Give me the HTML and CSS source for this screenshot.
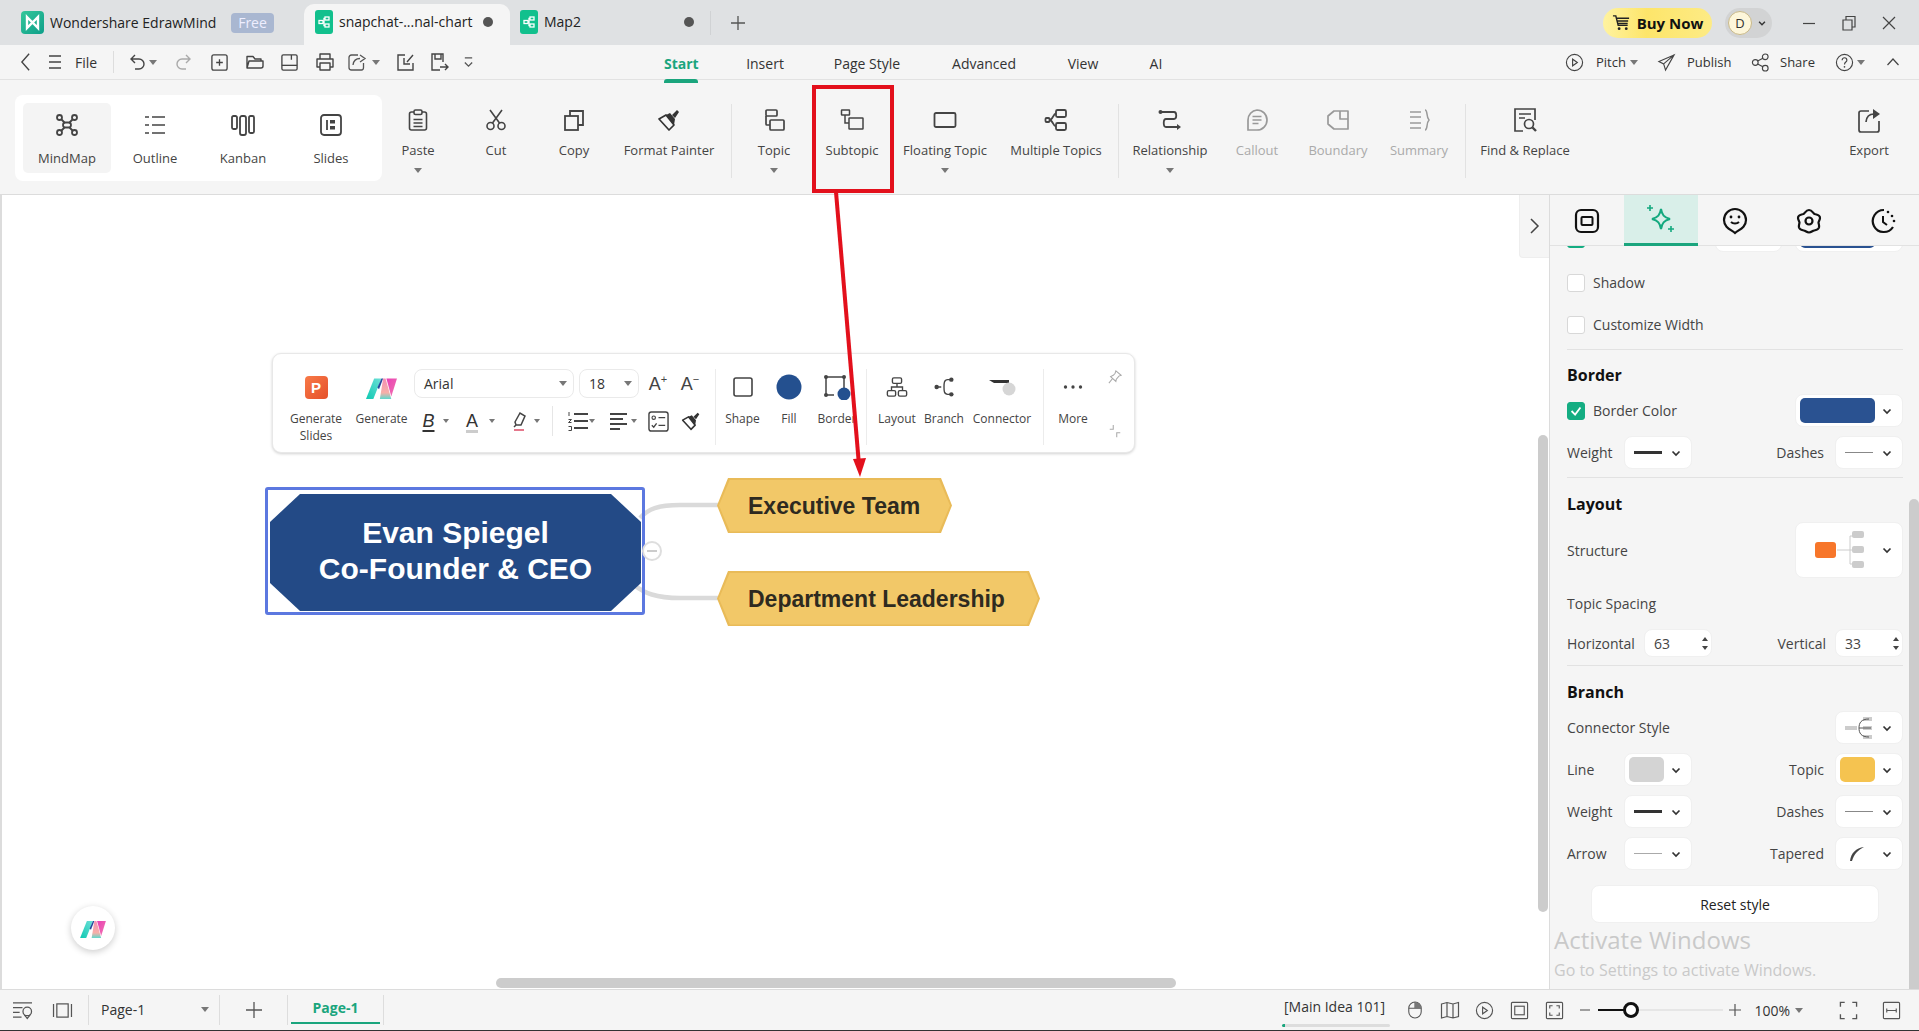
FILE: index.html
```html
<!DOCTYPE html>
<html lang="en">
<head>
<meta charset="utf-8">
<title>Wondershare EdrawMind</title>
<link rel="stylesheet" href="styles.css">
</head>
<body>
<svg class="sprite" width="0" height="0" aria-hidden="true">
  <defs>
    <linearGradient id="gAi" x1="0" y1="1" x2="1" y2="0">
      <stop offset="0" stop-color="#0fc9b2"/><stop offset="1" stop-color="#6fe0d8"/>
    </linearGradient>
    <linearGradient id="gAi2" x1="0" y1="0" x2="0" y2="1">
      <stop offset="0" stop-color="#f58fb4"/><stop offset=".7" stop-color="#f7b0a8"/><stop offset="1" stop-color="#5fd8cc"/>
    </linearGradient>
    <linearGradient id="gAi3" x1="0" y1="0" x2="1" y2="1">
      <stop offset="0" stop-color="#e83fb4"/><stop offset="1" stop-color="#f277b0"/>
    </linearGradient>
    <linearGradient id="gLogo" x1="0" y1="0" x2="1" y2="1">
      <stop offset="0" stop-color="#35c79a"/><stop offset="1" stop-color="#0e9f8a"/>
    </linearGradient>
    <symbol id="chev" viewBox="0 0 12 12"><path d="M2.500 4.500 6 8l3.500-3.500" fill="none" stroke="#333" stroke-width="1.700"/></symbol>
    <symbol id="doc" viewBox="0 0 18 24"><rect width="18" height="24" rx="3" fill="#12c08d"/><g fill="none" stroke="#fff" stroke-width="1.300"><rect x="10" y="7" width="4" height="3"/><rect x="10" y="14" width="4" height="3"/><rect x="4" y="10.500" width="4" height="3"/><path d="M8 12h1v-3.500h1M9 12v3.500h1"/></g></symbol>
    <symbol id="ai" viewBox="0 0 38 28"><path d="M0 28 10 3h9L9 28z" fill="url(#gAi)"/><path d="M14 14 19 3h2L16 16z" fill="#27489c"/><path d="M17 28l4-25h3l7 25z" fill="url(#gAi2)"/><path d="M25 3h13l-7 22z" fill="url(#gAi3)"/></symbol>
  </defs>
</svg>
<div class="app">
  <header class="titlebar">
    <svg class="applogo" viewBox="0 0 23 23"><rect width="23" height="23" rx="4" fill="url(#gLogo)"/><path d="M6 6l5.500 5.500L17 6v11l-5.500-5.500L6 17z" fill="none" stroke="#fff" stroke-width="2.400"/></svg>
    <span class="appname">Wondershare EdrawMind</span>
    <span class="free">Free</span>
    <div class="tab active">
      <svg class="docicon"><use href="#doc"/></svg>
      <span class="tabname">snapchat-...nal-chart</span>
      <i class="dot"></i>
    </div>
    <div class="tab map">
      <svg class="docicon"><use href="#doc"/></svg>
      <span class="tabname">Map2</span>
      <i class="dot"></i>
    </div>
    <i class="tabsep"></i>
    <svg class="plus" viewBox="0 0 16 16"><path d="M8 1v14M1 8h14" stroke="#555" stroke-width="1.300"/></svg>
    <div class="title-right">
      <div class="buy">
        <svg viewBox="0 0 20 20" width="19" height="19"><path d="M1 3h3l2.500 10h10M5 5.500h13M5.500 8.500h11.500M6 11h10.500" fill="none" stroke="#222" stroke-width="1.500"/><circle cx="7.500" cy="16.500" r="1.500" fill="#222"/><circle cx="15" cy="16.500" r="1.500" fill="#222"/></svg>
        <span>Buy Now</span>
      </div>
      <div class="avatar"><span class="avatar-d">D</span><svg width="10" height="10"><use href="#chev"/></svg></div>
      <div class="winbtns">
        <svg viewBox="0 0 14 14" width="14" height="14"><path d="M1 7.500h12" stroke="#444" stroke-width="1.200"/></svg>
        <svg viewBox="0 0 16 16" width="16" height="16"><path d="M2 5h9v10H2zM5 5V1.500h9V12h-3" fill="none" stroke="#444" stroke-width="1.200"/></svg>
        <svg viewBox="0 0 14 14" width="14" height="14"><path d="M1 1l12 12M13 1 1 13" stroke="#444" stroke-width="1.200"/></svg>
      </div>
    </div>
  </header>

  <nav class="menubar">
    <div class="quick">
      <svg viewBox="0 0 14 22" width="13" height="20"><path d="M11 2 3 11l8 9" fill="none" stroke="#444" stroke-width="1.500"/></svg>
      <svg viewBox="0 0 16 16" width="16" height="16"><path d="M2 2h12M2 8h12M2 14h12" stroke="#444" stroke-width="1.300"/></svg>
      <span class="file">File</span>
      <i class="vsep"></i>
      <svg viewBox="0 0 20 20" width="20" height="20"><path d="M7 3 3 7l4 4M3 7h8a5 5 0 0 1 0 10H7" fill="none" stroke="#444" stroke-width="1.400"/></svg>
      <i class="caret"></i>
      <svg viewBox="0 0 20 20" width="20" height="20"><path d="M13 3l4 4-4 4M17 7H9a5 5 0 0 0 0 10h4" fill="none" stroke="#aaa" stroke-width="1.400"/></svg>
      <svg viewBox="0 0 20 20" width="19" height="19"><rect x="2" y="2" width="16" height="16" rx="2" fill="none" stroke="#444" stroke-width="1.400"/><path d="M10 6.500v7M6.500 10h7" stroke="#444" stroke-width="1.400"/></svg>
      <svg viewBox="0 0 20 20" width="20" height="20"><path d="M2 16V4.500h6l2 2.500h6v2M2 16l2-7h14v5a2 2 0 0 1-2 2z" fill="none" stroke="#444" stroke-width="1.400" stroke-linejoin="round"/></svg>
      <svg viewBox="0 0 20 20" width="19" height="19"><path d="M2 3.500C2 2.500 2.500 2 3.500 2h13c1 0 1.500.5 1.500 1.500v13c0 1-.5 1.500-1.500 1.500h-13C2.500 18 2 17.500 2 16.500zM12 2v5" fill="none" stroke="#444" stroke-width="1.400"/><path d="M2 13h16" stroke="#444" stroke-width="1.400"/></svg>
      <svg viewBox="0 0 20 20" width="20" height="20"><path d="M5 7V2h10v5M5 15H2V7h16v8h-3M5 11h10v7H5z" fill="none" stroke="#444" stroke-width="1.400" stroke-linejoin="round"/></svg>
      <svg viewBox="0 0 20 20" width="20" height="20"><path d="M11 3H4.500C3 3 2 4 2 5.500v10C2 17 3 18 4.500 18h10c1.500 0 2-1 2-2.500V11M6 13c.5-4 3-6.500 7-6.500M13 3l5 3.500L13 10" fill="none" stroke="#555" stroke-width="1.300"/></svg>
      <i class="caret"></i>
      <svg viewBox="0 0 20 20" width="20" height="20"><path d="M9 3H2v15h15v-7M17 3l-6 7M8 6v6h6" fill="none" stroke="#444" stroke-width="1.400"/></svg>
      <svg viewBox="0 0 20 20" width="20" height="20"><path d="M11 18H3V2h11v8M6 2v5h6V2M11 15h8M16 12l3 3-3 3" fill="none" stroke="#444" stroke-width="1.400"/></svg>
      <svg viewBox="0 0 12 14" width="11" height="13"><path d="M2 2h8M2 7l4 4 4-4" fill="none" stroke="#555" stroke-width="1.400"/></svg>
    </div>
    <div class="tabs">
      <span class="tabitem on">Start</span>
      <span class="tabitem">Insert</span>
      <span class="tabitem">Page Style</span>
      <span class="tabitem">Advanced</span>
      <span class="tabitem">View</span>
      <span class="tabitem">AI</span>
    </div>
    <div class="menu-right">
      <svg viewBox="0 0 20 20" width="19" height="19"><circle cx="10" cy="10" r="8.500" fill="none" stroke="#444" stroke-width="1.200"/><path d="M8 6.500v7l5-3.500z" fill="none" stroke="#444" stroke-width="1.200"/></svg>
      <span>Pitch</span>
      <i class="caret"></i>
      <svg viewBox="0 0 20 20" width="19" height="19"><path d="M18 2 2 9l5 2.500L9 18zM18 2 7 11.500" fill="none" stroke="#444" stroke-width="1.200"/></svg>
      <span>Publish</span>
      <svg viewBox="0 0 20 20" width="19" height="19"><g fill="none" stroke="#444" stroke-width="1.200"><circle cx="4.500" cy="10" r="3"/><circle cx="15" cy="4" r="3"/><circle cx="15" cy="16" r="3"/><path d="M7 8.500l5.500-3M7 11.500l5.500 3"/></g></svg>
      <span>Share</span>
      <svg viewBox="0 0 20 20" width="19" height="19"><circle cx="10" cy="10" r="8.500" fill="none" stroke="#444" stroke-width="1.200"/><path d="M7.500 7.500c0-3.300 5-3.300 5 0 0 2-2.500 2-2.500 4.500" fill="none" stroke="#444" stroke-width="1.200"/><circle cx="10" cy="14.500" r=".9" fill="#444"/></svg>
      <i class="caret"></i>
      <svg viewBox="0 0 14 10" width="14" height="10"><path d="M1.500 8 7 2l5.500 6" fill="none" stroke="#444" stroke-width="1.200"/></svg>
    </div>
  </nav>

  <section class="ribbon">
    <div class="modes">
      <div class="mode sel">
        <div class="ico"><svg viewBox="0 0 24 24" width="24" height="24"><g fill="none" stroke="#444" stroke-width="1.800"><rect x="8" y="9.500" width="8" height="5" rx="2.500"/><circle cx="4.500" cy="4.500" r="2.500"/><circle cx="19.500" cy="4.500" r="2.500"/><circle cx="4.500" cy="19.500" r="2.500"/><circle cx="19.500" cy="19.500" r="2.500"/><path d="M6.500 6.500l3 3M17.500 6.500l-3 3M6.500 17.500l3-3M17.500 17.500l-3-3"/></g></svg></div>
        <span>MindMap</span>
      </div>
      <div class="mode">
        <div class="ico"><svg viewBox="0 0 24 24" width="24" height="24"><path d="M9 4h13M9 12h13M9 20h13M2 4h4M2 12h4M2 20h4" stroke="#444" stroke-width="1.600"/></svg></div>
        <span>Outline</span>
      </div>
      <div class="mode">
        <div class="ico"><svg viewBox="0 0 26 24" width="26" height="24"><g fill="none" stroke="#444" stroke-width="1.800"><rect x="2" y="3" width="5" height="13" rx="1.500"/><rect x="10" y="3" width="6" height="19" rx="2"/><rect x="19" y="3" width="5" height="17" rx="1.500"/></g></svg></div>
        <span>Kanban</span>
      </div>
      <div class="mode">
        <div class="ico"><svg viewBox="0 0 24 24" width="24" height="24"><rect x="2" y="2" width="20" height="20" rx="3" fill="none" stroke="#444" stroke-width="1.800"/><path d="M8 7v10" stroke="#444" stroke-width="1.800"/><rect x="11" y="7" width="5" height="3.500" fill="#444"/><rect x="11" y="13" width="5" height="3.500" fill="#444"/></svg></div>
        <span>Slides</span>
      </div>
    </div>
    <div class="tools">
      <div class="tool">
        <div class="ico"><svg viewBox="0 0 24 24" width="24" height="24"><g fill="none" stroke="#444" stroke-width="1.600"><path d="M8 4H5.500C4 4 3.500 5 3.500 6v14c0 1 .5 2 2 2h13c1.500 0 2-1 2-2V6c0-1-.5-2-2-2H16"/><rect x="8" y="2" width="8" height="4.500" rx="1.500"/><path d="M7.500 11.500h9M7.500 15h9M7.500 18.500h9"/></g></svg></div>
        <span>Paste</span><i class="caret"></i>
      </div>
      <div class="tool">
        <div class="ico"><svg viewBox="0 0 24 24" width="24" height="24"><g fill="none" stroke="#444" stroke-width="1.600"><circle cx="6.500" cy="18" r="3.500"/><circle cx="17.500" cy="18" r="3.500"/><path d="M8.500 15 18 2M15.500 15 6 2"/></g></svg></div>
        <span>Cut</span>
      </div>
      <div class="tool">
        <div class="ico"><svg viewBox="0 0 24 24" width="24" height="24"><g fill="none" stroke="#444" stroke-width="1.800"><rect x="3" y="8" width="13" height="14"/><path d="M8 8V3h13v14h-5"/></g></svg></div>
        <span>Copy</span>
      </div>
      <div class="tool">
        <div class="ico"><svg viewBox="0 0 24 24" width="24" height="24"><path d="M2 11l7-4 8 10-5 5z" fill="none" stroke="#333" stroke-width="1.700" stroke-linejoin="round"/><path d="M9 7l4-2 5 6-1 6zM15 7l5-5 2 2-4 6z" fill="#333"/></svg></div>
        <span>Format Painter</span>
      </div>
      <i class="rsep"></i>
      <div class="tool">
        <div class="ico"><svg viewBox="0 0 24 24" width="24" height="24"><g fill="none" stroke="#444" stroke-width="1.700"><rect x="4" y="2" width="11" height="6" rx="1"/><rect x="8" y="12" width="14" height="10" rx="1"/><path d="M4 8v8c0 1 .5 1 1 1h3"/></g></svg></div>
        <span>Topic</span><i class="caret"></i>
      </div>
      <div class="tool">
        <div class="ico"><svg viewBox="0 0 24 24" width="24" height="24"><g fill="none" stroke="#444" stroke-width="1.500"><rect x="1.500" y="2" width="8" height="5" rx=".5"/><rect x="9" y="10" width="14" height="11" rx=".5"/><path d="M5 7v8h4"/></g></svg></div>
        <span>Subtopic</span>
      </div>
      <div class="tool">
        <div class="ico"><svg viewBox="0 0 24 24" width="24" height="24"><rect x="1.500" y="5" width="21" height="14" rx="1.500" fill="none" stroke="#444" stroke-width="1.800"/></svg></div>
        <span>Floating Topic</span><i class="caret"></i>
      </div>
      <div class="tool">
        <div class="ico"><svg viewBox="0 0 24 24" width="24" height="24"><g fill="none" stroke="#444" stroke-width="1.800"><rect x="12" y="2" width="10" height="7" rx="1.500"/><rect x="12" y="15" width="10" height="7" rx="1.500"/><rect x="1.500" y="10" width="4" height="4" rx="1"/><path d="M12 5.500c-3 0-3 6.500-6.500 6.500 3.500 0 3.500 6.500 6.500 6.500"/></g></svg></div>
        <span>Multiple Topics</span>
      </div>
      <i class="rsep"></i>
      <div class="tool">
        <div class="ico"><svg viewBox="0 0 24 24" width="24" height="24"><g fill="none" stroke="#444" stroke-width="1.800"><path d="M2 4h14c3 0 3 7 0 7H8c-3 0-3 8 0 8h13"/></g><circle cx="2.500" cy="4" r="2" fill="#444"/><path d="M19 16l4 3-4 3z" fill="#444"/></svg></div>
        <span>Relationship</span><i class="caret"></i>
      </div>
      <div class="tool dim">
        <div class="ico"><svg viewBox="0 0 24 24" width="24" height="24"><path d="M12 2a10 10 0 0 1 0 20H3v-10A10 10 0 0 1 12 2zM7.500 8.500h9M7.500 12h9M7.500 15.500h6" fill="none" stroke="#999" stroke-width="1.700"/></svg></div>
        <span>Callout</span>
      </div>
      <div class="tool dim">
        <div class="ico"><svg viewBox="0 0 24 24" width="24" height="24"><path d="M8 3h14v18H8l-6-5V8zM14 3v8h8" fill="none" stroke="#999" stroke-width="1.700" stroke-linejoin="round"/></svg></div>
        <span>Boundary</span>
      </div>
      <div class="tool dim">
        <div class="ico"><svg viewBox="0 0 24 24" width="24" height="24"><path d="M3 4h11M3 9h11M3 15h11M3 20h11M18 2c3 0 1 7 4 10-3 3-1 10-4 10" fill="none" stroke="#999" stroke-width="1.500"/></svg></div>
        <span>Summary</span>
      </div>
      <i class="rsep"></i>
      <div class="tool">
        <div class="ico"><svg viewBox="0 0 24 24" width="24" height="24"><g fill="none" stroke="#444" stroke-width="1.700"><path d="M10 23H2V1h20v11"/><path d="M6 6h12M6 10h6"/><circle cx="16" cy="16" r="4.500"/><path d="M19.500 19.500 23 23" stroke-width="2.400"/></g></svg></div>
        <span>Find &amp; Replace</span>
      </div>
      <i></i>
      <div class="tool">
        <div class="ico"><svg viewBox="0 0 24 28" width="24" height="28"><path d="M12 5H4C2.500 5 2 6 2 7v17c0 1 .5 2 2 2h16c1 0 2-1 2-2v-9" fill="none" stroke="#444" stroke-width="1.700"/><path d="M9 16c.5-6 4-8 8-8" fill="none" stroke="#444" stroke-width="1.700"/><path d="M16 3l7 5-7 5z" fill="#444"/></svg></div>
        <span>Export</span>
      </div>
    </div>
  </section>

  <main class="workspace">
    <div class="canvas">
      <svg class="links" viewBox="0 0 1549 794" width="1549" height="794">
        <path d="M640 323c8-9 18-13 40-13h40M634 390c10 8 22 13 46 13h40" fill="none" stroke="#dadada" stroke-width="4.500"/>
      </svg>
      <div class="selection"></div>
      <div class="root"><span>Evan Spiegel<br>Co-Founder &amp; CEO</span></div>
      <div class="fold"><i></i></div>
      <div class="node exec"><span>Executive Team</span></div>
      <div class="node dept"><span>Department Leadership</span></div>

      <div class="floatbar">
        <div class="fitem gen1">
          <div class="ficon"><b class="ppt">P</b></div>
          <span>Generate Slides</span>
        </div>
        <div class="fitem gen2">
          <div class="ficon"><svg width="31" height="23"><use href="#ai"/></svg></div>
          <span>Generate</span>
        </div>
        <div class="fonts">
          <div class="fontrow">
            <div class="sel-box family"><span>Arial</span><i class="caret"></i></div>
            <div class="sel-box size"><span>18</span><i class="caret"></i></div>
            <span class="grow">A<sup>+</sup></span>
            <span class="grow">A<sup>−</sup></span>
          </div>
          <div class="fmtrow">
            <span class="fmt bold">B</span><i class="caret ml4"></i>
            <span class="fmt acolor">A</span><i class="caret ml6"></i>
            <svg class="ml14" viewBox="0 0 20 24" width="20" height="24"><path d="M6 13 11 4l5 3-4 9H7zM5 18l2-2" fill="none" stroke="#444" stroke-width="1.500"/><path d="M5 21h10" stroke="#e5788c" stroke-width="2"/></svg><i class="caret ml5"></i>
            <i class="rowsep"></i>
            <svg class="ml14" viewBox="0 0 22 24" width="22" height="24"><path d="M7 5h14M7 12h14M7 19h14" stroke="#444" stroke-width="1.800"/><path d="M2 3v4M1.500 10.500h3l-3 3h3M1.500 17.500h3v4h-3" fill="none" stroke="#444" stroke-width="1"/></svg><i class="caret"></i>
            <svg class="ml13" viewBox="0 0 20 24" width="20" height="24"><path d="M2 5h17M2 10h13M2 15h17M2 20h10" stroke="#444" stroke-width="1.800"/></svg><i class="caret ml3"></i>
            <svg class="ml11" viewBox="0 0 22 22" width="21" height="21"><rect x="1" y="1" width="20" height="20" rx="2.500" fill="none" stroke="#444" stroke-width="1.500"/><circle cx="6" cy="7" r="1.800" fill="none" stroke="#444" stroke-width="1.200"/><path d="M11 7h7M11 15h7M4 15l2 2 3-4" fill="none" stroke="#444" stroke-width="1.400"/></svg>
            <svg class="ml12" viewBox="0 0 24 24" width="20" height="20"><path d="M2 11l7-4 8 10-5 5z" fill="none" stroke="#333" stroke-width="1.900" stroke-linejoin="round"/><path d="M9 7l4-2 5 6-1 6zM15 7l5-5 2 2-4 6z" fill="#333"/></svg>
          </div>
        </div>
        <i class="fsep"></i>
        <div class="fitem shape">
          <div class="ficon"><svg viewBox="0 0 24 24" width="24" height="24"><rect x="3" y="3" width="18" height="18" rx="2" fill="none" stroke="#444" stroke-width="1.600"/></svg></div>
          <span>Shape</span>
        </div>
        <div class="fitem fill">
          <div class="ficon"><svg viewBox="0 0 26 26" width="26" height="26"><circle cx="13" cy="13" r="12.500" fill="#24508f"/></svg></div>
          <span>Fill</span>
        </div>
        <div class="fitem border">
          <div class="ficon"><svg viewBox="0 0 28 26" width="28" height="26"><g fill="none" stroke="#444" stroke-width="1.500"><path d="M3 3h18v14M3 3v18h8"/></g><g fill="#444"><circle cx="3" cy="3" r="2"/><circle cx="21" cy="3" r="2"/><circle cx="3" cy="21" r="2"/></g><circle cx="21" cy="20" r="6.500" fill="#24508f"/></svg></div>
          <span>Border</span>
        </div>
        <i class="fsep"></i>
        <div class="fitem layout">
          <div class="ficon"><svg viewBox="0 0 24 24" width="22" height="22"><g fill="none" stroke="#444" stroke-width="1.500"><rect x="7" y="2" width="10" height="6" rx="1.500"/><rect x="1.500" y="16" width="9" height="6" rx="1.500"/><rect x="13.500" y="16" width="9" height="6" rx="1.500"/><path d="M12 8v4M6 16v-4h12v4"/></g></svg></div>
          <span>Layout</span>
        </div>
        <div class="fitem branch">
          <div class="ficon"><svg viewBox="0 0 24 24" width="22" height="22"><path d="M4 12h5M20 4h-4c-4 0-4 4-4 8s0 8 4 8h4" fill="none" stroke="#444" stroke-width="1.500"/><g fill="#444"><circle cx="4" cy="12" r="2.400"/><circle cx="20" cy="4" r="2.400"/><circle cx="20" cy="20" r="2.400"/></g></svg></div>
          <span>Branch</span>
        </div>
        <div class="fitem connector">
          <div class="ficon"><svg viewBox="0 0 28 26" width="28" height="26"><path d="M1 6h20v3H6z" fill="#333"/><circle cx="21" cy="15" r="6.500" fill="#d6d6d6"/></svg></div>
          <span>Connector</span>
        </div>
        <i class="fsep"></i>
        <div class="fitem more">
          <div class="ficon"><svg viewBox="0 0 24 6" width="20" height="6"><g fill="#444"><circle cx="3" cy="3" r="2"/><circle cx="12" cy="3" r="2"/><circle cx="21" cy="3" r="2"/></g></svg></div>
          <span>More</span>
        </div>
        <div class="pins">
          <svg viewBox="0 0 16 16" width="14" height="14"><path d="M9 1l6 5-2.500 1-3 3.500-.5 2.500-6-5.500L6 6l2-2zM5 10l-4 5" fill="none" stroke="#aaa" stroke-width="1.200"/></svg>
          <svg viewBox="0 0 16 16" width="14" height="14"><path d="M6 1v5H2M10 15v-5h4" fill="none" stroke="#aaa" stroke-width="1.200"/></svg>
        </div>
      </div>

      <div class="aibtn"><svg width="26" height="19"><use href="#ai"/></svg></div>
      <div class="collapse"><svg viewBox="0 0 12 18" width="12" height="18"><path d="M2 2l7 7-7 7" fill="none" stroke="#444" stroke-width="1.500"/></svg></div>
      <div class="vscroll"></div>
      <div class="hscroll"></div>
    </div>

    <aside class="panel">
      <div class="ptabs">
        <div class="ptab"><svg viewBox="0 0 26 26" width="26" height="26"><rect x="2" y="2" width="22" height="22" rx="5" fill="none" stroke="#111" stroke-width="2.200"/><rect x="7.500" y="9" width="11" height="8" rx="1" fill="none" stroke="#111" stroke-width="2"/></svg></div>
        <div class="ptab on"><svg viewBox="0 0 30 30" width="30" height="30"><path d="M15 5c1 6 3 8.500 9 10-6 1.500-8 4-9 10-1-6-3-8.500-9-10 6-1.500 8-4 9-10z" fill="none" stroke="#14a97f" stroke-width="2"/><path d="M4 1v6M1 4h6M25 22v6M22 25h6" stroke="#14a97f" stroke-width="1.600"/></svg></div>
        <div class="ptab"><svg viewBox="0 0 26 28" width="26" height="28"><path d="M13 26c-3-3-11-5-11-13a11 11 0 0 1 22 0c0 8-8 10-11 13z" fill="none" stroke="#111" stroke-width="2.200"/><circle cx="9" cy="10" r="1.400" fill="#111"/><circle cx="17" cy="10" r="1.400" fill="#111"/><path d="M9 15c2 2 6 2 8 0" fill="none" stroke="#111" stroke-width="2"/></svg></div>
        <div class="ptab"><svg viewBox="0 0 26 26" width="26" height="26"><path d="M13 2c3 0 4 3 5.500 4 2 .5 5.500 .5 5.500 4 0 2-1.500 3.500-1.500 4.500s1 3 .5 5c-1 3-4 2.500-5 3-1.500.5-3 2-5 2s-3.500-1.500-5-2c-1-.5-4 0-5-3-.5-2 .5-4 .5-5S2 12 2 10c0-3.500 3.500-3.500 5.500-4C9 5 10 2 13 2z" fill="none" stroke="#111" stroke-width="2.200"/><circle cx="13" cy="13" r="3.500" fill="none" stroke="#111" stroke-width="2.200"/></svg></div>
        <div class="ptab"><svg viewBox="0 0 26 26" width="26" height="26"><path d="M14 2a11 11 0 1 0 9 17" fill="none" stroke="#111" stroke-width="2.200"/><path d="M13 8v6l4 3" fill="none" stroke="#111" stroke-width="2"/><g fill="#111"><circle cx="18" cy="4" r="1.300"/><circle cx="22" cy="8" r="1.300"/><circle cx="24" cy="13" r="1.300"/></g></svg></div>
      </div>
      <div class="pbody">
        <div class="row first">
          <i class="check on"><svg viewBox="0 0 18 18"><path d="M4 9l4 4 6-8" fill="none" stroke="#fff" stroke-width="2"/></svg></i>
          <div class="ctl ctl-a"></div>
          <div class="ctl swatchctl"><i class="swatch navy"></i><svg width="12" height="12"><use href="#chev"/></svg></div>
        </div>
        <div class="row checkrow shadow"><i class="check"></i><span>Shadow</span></div>
        <div class="row checkrow custom"><i class="check"></i><span>Customize Width</span></div>
        <hr class="div d1">
        <h3 class="ph">Border</h3>
        <div class="row between r7">
          <div class="checklabel"><i class="check on"><svg viewBox="0 0 18 18"><path d="M4 9l4 4 6-8" fill="none" stroke="#fff" stroke-width="2"/></svg></i><span>Border Color</span></div>
          <div class="ctl swatchctl"><i class="swatch navy"></i><svg width="12" height="12"><use href="#chev"/></svg></div>
        </div>
        <div class="pair r9">
          <span>Weight</span>
          <div class="ctl"><i class="ln heavy"></i><svg width="12" height="12"><use href="#chev"/></svg></div>
          <span class="rl">Dashes</span>
          <div class="ctl"><i class="ln thin"></i><svg width="12" height="12"><use href="#chev"/></svg></div>
        </div>
        <hr class="div d2">
        <h3 class="ph">Layout</h3>
        <div class="row between r6">
          <span>Structure</span>
          <div class="ctl struct">
            <svg viewBox="0 0 56 40" width="56" height="40"><path d="M22 20h13M35 6v28h7M35 6h7M35 20h7" fill="none" stroke="#ccc" stroke-width="1"/><rect y="12" width="21" height="16" rx="3" fill="#f7762a"/><rect x="37" y="1" width="12" height="7" rx="2" fill="#ccc"/><rect x="37" y="16" width="12" height="7" rx="2" fill="#ccc"/><rect x="37" y="31" width="12" height="7" rx="2" fill="#ccc"/></svg>
            <svg width="12" height="12"><use href="#chev"/></svg>
          </div>
        </div>
        <div class="spacing-title">Topic Spacing</div>
        <div class="pair wide spin-row">
          <span>Horizontal</span>
          <div class="ctl spin"><span>63</span><em class="arrows"><i class="up"></i><i class="down"></i></em></div>
          <span class="rl">Vertical</span>
          <div class="ctl spin"><span>33</span><em class="arrows"><i class="up"></i><i class="down"></i></em></div>
        </div>
        <hr class="div d3">
        <h3 class="ph">Branch</h3>
        <div class="row between r7">
          <span>Connector Style</span>
          <div class="ctl">
            <svg viewBox="0 0 28 24" width="28" height="24"><path d="M0 12h12M18 3h9M18 12h9M18 21h9" stroke="#ccc" stroke-width="4"/><path d="M14 12h12M24 3c-8 0-10 4-10 9s2 9 10 9" fill="none" stroke="#555" stroke-width="1"/></svg>
            <svg width="12" height="12"><use href="#chev"/></svg>
          </div>
        </div>
        <div class="pair r9">
          <span>Line</span>
          <div class="ctl"><i class="swatch mini gray"></i><svg width="12" height="12"><use href="#chev"/></svg></div>
          <span class="rl">Topic</span>
          <div class="ctl"><i class="swatch mini gold"></i><svg width="12" height="12"><use href="#chev"/></svg></div>
        </div>
        <div class="pair r9">
          <span>Weight</span>
          <div class="ctl"><i class="ln heavy"></i><svg width="12" height="12"><use href="#chev"/></svg></div>
          <span class="rl">Dashes</span>
          <div class="ctl"><i class="ln thin"></i><svg width="12" height="12"><use href="#chev"/></svg></div>
        </div>
        <div class="pair r9">
          <span>Arrow</span>
          <div class="ctl"><i class="ln thin light"></i><svg width="12" height="12"><use href="#chev"/></svg></div>
          <span class="rl">Tapered</span>
          <div class="ctl"><svg viewBox="0 0 24 20" width="24" height="20"><path d="M5 17C6 9 11 4 19 3 13 6 9 10 7 17z" fill="#444"/></svg><svg width="12" height="12"><use href="#chev"/></svg></div>
        </div>
        <button class="reset">Reset style</button>
      </div>
      <div class="activate">
        <div class="a1">Activate Windows</div>
        <div class="a2">Go to Settings to activate Windows.</div>
      </div>
      <div class="pscroll"></div>
    </aside>
  </main>

  <footer class="statusbar">
    <div class="st-left">
      <svg viewBox="0 0 22 20" width="21" height="19"><path d="M1 2h20M1 7h10M1 12h7M1 17h9" stroke="#555" stroke-width="1.300"/><circle cx="16" cy="11" r="4.500" fill="none" stroke="#555" stroke-width="1.300"/><path d="M13 14.500l3 4 3-4" fill="none" stroke="#555" stroke-width="1.300"/></svg>
      <svg viewBox="0 0 22 18" width="21" height="17"><path d="M1.500 2v14M20.500 2v14" stroke="#555" stroke-width="1.300"/><rect x="5" y="2" width="12" height="14" fill="none" stroke="#555" stroke-width="1.300"/></svg>
      <div class="pagesel"><span>Page-1</span><i class="caret"></i></div>
      <svg class="addpage" viewBox="0 0 18 18" width="18" height="18"><path d="M9 1v16M1 9h16" stroke="#555" stroke-width="1.300"/></svg>
      <div class="pagetab">Page-1</div>
    </div>
    <div class="st-right">
      <div class="status"><span>[Main Idea 101]</span><i class="progress"></i></div>
      <svg viewBox="0 0 18 22" width="16" height="20"><rect x="2" y="2" width="14" height="18" rx="7" fill="none" stroke="#555" stroke-width="1.200"/><path d="M2 9h14M9 2v7" stroke="#555" stroke-width="1.200"/><path d="M9 2a7 7 0 0 1 7 7H9z" fill="#777"/></svg>
      <svg viewBox="0 0 20 18" width="20" height="18"><path d="M1.500 3 7 1.500 13 3l5.500-1.500v14L13 17l-6-1.500L1.500 17zM7 1.500v14M13 3v14" fill="none" stroke="#555" stroke-width="1.200"/></svg>
      <svg viewBox="0 0 20 20" width="19" height="19"><circle cx="10" cy="10" r="8.500" fill="none" stroke="#555" stroke-width="1.200"/><path d="M8 6.500v7l5-3.500z" fill="none" stroke="#555" stroke-width="1.200"/></svg>
      <svg viewBox="0 0 20 20" width="19" height="19"><rect x="1.500" y="1.500" width="17" height="17" rx="1" fill="none" stroke="#555" stroke-width="1.200"/><rect x="5" y="5.500" width="10" height="9" fill="none" stroke="#555" stroke-width="1.200"/></svg>
      <svg viewBox="0 0 20 20" width="19" height="19"><rect x="1.500" y="1.500" width="17" height="17" rx="1" fill="none" stroke="#555" stroke-width="1.200"/><path d="M5 8V5h3M15 8V5h-3M5 12v3h3M15 12v3h-3" fill="none" stroke="#555" stroke-width="1.200"/></svg>
      <svg viewBox="0 0 12 12" width="12" height="12"><path d="M1 6h10" stroke="#666" stroke-width="1.200"/></svg>
      <div class="slider"><i class="track"></i><i class="fillbar"></i><i class="knob"></i></div>
      <svg viewBox="0 0 14 14" width="14" height="14"><path d="M7 1v12M1 7h12" stroke="#555" stroke-width="1.200"/></svg>
      <span class="zoomval">100%</span>
      <i class="caret"></i>
      <svg viewBox="0 0 20 20" width="19" height="19"><path d="M1.500 6V1.500H6M14 1.500h4.500V6M1.500 14v4.500H6M14 18.500h4.500V14" fill="none" stroke="#555" stroke-width="1.400"/></svg>
      <svg viewBox="0 0 20 20" width="19" height="19"><rect x="1.500" y="1.500" width="17" height="17" rx="1" fill="none" stroke="#555" stroke-width="1.200"/><path d="M5 10h10M5 8v4M15 8v4" fill="none" stroke="#555" stroke-width="1.200"/></svg>
    </div>
  </footer>

  <svg class="callout" viewBox="0 0 1919 1031" width="1919" height="1031">
    <rect x="814" y="87" width="78" height="104" fill="none" stroke="#e3101c" stroke-width="4"/>
    <path d="M836 192 859 465" stroke="#e3101c" stroke-width="4" fill="none"/>
    <path d="M853 459 866 458 860 477z" fill="#e3101c"/>
  </svg>
</div>
</body>
</html>
```
FILE: styles.css
```css
* { box-sizing: border-box; }
html, body { margin: 0; padding: 0; }
body { font-family: "Open Sans", "Noto Sans", "Liberation Sans", sans-serif; font-size: 13px; color: #333; background: #f5f5f5; }
i, em { font-style: normal; }
svg { display: block; flex: none; }
.sprite { position: absolute; }
.app { position: relative; width: 1919px; height: 1031px; overflow: hidden; display: flex; flex-direction: column; }

.caret { display: block; width: 0; height: 0; border-left: 4px solid transparent; border-right: 4px solid transparent; border-top: 5px solid #777; flex: none; }
.ml3 { margin-left: 3px; }
.ml4 { margin-left: 4px; }
.ml5 { margin-left: 5px; }
.ml6 { margin-left: 6px; }
.ml11 { margin-left: 11px; }
.ml12 { margin-left: 12px; }
.ml13 { margin-left: 13px; }
.ml14 { margin-left: 14px; }

/* Title bar */
.titlebar { height: 45px; flex: none; background: #dfe1e3; display: flex; align-items: center; padding-left: 21px; }
.applogo { width: 23px; height: 23px; }
.appname { margin-left: 6px; width: 181px; font-size: 14px; white-space: nowrap; color: #222; padding-bottom: 1px; }
.free { width: 43px; height: 20px; line-height: 20px; text-align: center; background: #a9b7d1; color: #eef; border-radius: 4px; font-size: 14px; }
.tab { height: 41px; align-self: flex-end; display: flex; align-items: center; font-size: 14px; color: #222; }
.tab.active { margin-left: 30px; width: 206px; background: #f5f5f5; border-radius: 10px 10px 0 0; padding-left: 11px; }
.tab.map { width: 200px; padding-left: 10px; }
.docicon { width: 18px; height: 24px; margin-top: -6px; }
.tabname { margin-left: 6px; white-space: nowrap; margin-top: -7px; }
.tab .dot { width: 10px; height: 10px; border-radius: 50%; background: #555; margin-left: 11px; margin-top: -6px; }
.tab.map .dot { margin-left: auto; margin-right: 16px; }
.tabsep { width: 1px; height: 24px; background: #d0d2d4; }
.plus { width: 16px; height: 16px; margin-left: 19px; }
.title-right { margin-left: auto; display: flex; align-items: center; }
.buy { width: 109px; height: 30px; border-radius: 15px; background: linear-gradient(90deg, #fff3a0, #fde56a 40%, #fdeb85); display: flex; align-items: center; justify-content: center; gap: 6px; font-weight: 700; font-size: 15px; color: #111; }
.avatar { margin-left: 13px; width: 47px; height: 30px; border-radius: 15px; background: #d2d3d4; display: flex; align-items: center; gap: 5px; padding-left: 3px; }
.avatar-d { width: 24px; height: 24px; border-radius: 50%; background: #fdf6da; border: 1px solid #c9b98a; font-size: 13px; line-height: 22px; text-align: center; }
.winbtns { margin-left: 30px; width: 117px; display: flex; align-items: center; gap: 25px; }

/* Menu bar */
.menubar { height: 35px; flex: none; background: #f5f5f5; border-bottom: 1px solid #e2e2e2; display: flex; align-items: center; padding-left: 15px; }
.quick { width: 649px; display: grid; grid-template-columns: 20px 40px 24px 28px 22px 14px 39px 35px 35px 35px 35px 30px 19px 30px 36px 22px; align-items: center; justify-items: center; }
.quick .caret { justify-self: start; }
.file { font-size: 14px; justify-self: start; }
.vsep { width: 1px; height: 22px; background: #ddd; }
.tabs { display: grid; grid-template-columns: 34px 134px 70px 164px 34px 112px; align-self: stretch; }
.tabitem { font-size: 14px; line-height: 38px; text-align: center; position: relative; white-space: nowrap; color: #333; }
.tabitem.on { color: #1aa57d; font-weight: 700; }
.tabitem.on::after { content: ""; position: absolute; left: 0; right: 0; bottom: 0; height: 4px; background: #1aa57d; border-radius: 3px 3px 0 0; }
.menu-right { margin-left: auto; margin-right: 15px; display: grid; grid-template-columns: 31px 34px 27px 30px 64px 29px 55px 22px 29px 18px; align-items: center; white-space: nowrap; }

/* Ribbon */
.ribbon { height: 115px; flex: none; background: #f5f5f5; border-bottom: 1px solid #dcdcdc; display: flex; padding-left: 15px; padding-right: 10px; }
.ico { height: 40px; display: flex; align-items: center; justify-content: center; }
.modes { width: 367px; height: 86px; margin-top: 15px; background: #fff; border-radius: 8px; padding: 8px; display: grid; grid-template-columns: repeat(4, 88px); }
.mode { height: 70px; border-radius: 5px; padding-top: 2px; display: flex; flex-direction: column; align-items: center; color: #444; }
.mode span { line-height: 22px; margin-top: 2px; }
.mode.sel { background: #f4f4f4; }
.tools { flex: 1; display: grid; grid-template-columns: 72px 84px 72px 118px 6px 80px 76px 110px 112px 12px 92px 82px 80px 82px 10px 110px 1fr 80px; }
.tool { padding-top: 20px; display: flex; flex-direction: column; align-items: center; color: #444; white-space: nowrap; }
.tool span { line-height: 22px; margin-top: -1px; }
.tool .caret { margin-top: 7px; }
.tool.dim span { color: #aaa; }
.rsep { width: 1px; height: 74px; margin-top: 24px; background: #e2e2e2; justify-self: center; }

/* Canvas */
.workspace { flex: 1; min-height: 0; display: flex; }
.canvas { position: relative; width: 1549px; flex: none; background: #fff; border-left: 2px solid #dcdcdc; overflow: hidden; }
.links { position: absolute; left: -2px; top: 0; }
.selection { position: absolute; left: 263px; top: 292px; width: 380px; height: 128px; border: 3px solid #5c78e0; border-radius: 3px; }
.root { position: absolute; left: 268px; top: 299px; width: 371px; height: 117px; display: flex; align-items: center; justify-content: center; text-align: center; background: #234a86; color: #fff; font: 700 30px/36px "Liberation Sans", Arial, sans-serif; clip-path: polygon(30px 0, calc(100% - 30px) 0, 100% 28px, 100% calc(100% - 28px), calc(100% - 30px) 100%, 30px 100%, 0 calc(100% - 28px), 0 28px); }
.root span { margin-top: -3px; }
.fold { position: absolute; left: 640px; top: 346px; width: 20px; height: 20px; border-radius: 50%; background: #fff; border: 2px solid #dedede; display: flex; align-items: center; justify-content: center; }
.fold i { width: 10px; height: 2px; background: #ccc; }
.node { position: absolute; left: 715px; height: 55px; background: #e9bb58; display: flex; align-items: center; padding-left: 31px; clip-path: polygon(11px 0, calc(100% - 11px) 0, 100% 50%, calc(100% - 11px) 100%, 11px 100%, 0 50%); }
.node::before { content: ""; position: absolute; inset: 1.500px 2px; background: #f2c868; clip-path: polygon(11px 0, calc(100% - 11px) 0, 100% 50%, calc(100% - 11px) 100%, 11px 100%, 0 50%); }
.node span { position: relative; font: 700 23px/30px "Liberation Sans", Arial, sans-serif; color: #2e2a20; white-space: nowrap; }
.exec { top: 283px; width: 235px; }
.dept { top: 376px; width: 323px; }

/* Floating toolbar */
.floatbar { position: absolute; left: 270px; top: 158px; width: 863px; height: 100px; background: #fff; border: 1px solid #e8e8e8; border-radius: 9px; box-shadow: 0 1px 3px rgba(0,0,0,.18); display: grid; grid-template-columns: 10px 66px 65px 298px 6px 49px 44px 52px 6px 56px 38px 78px 4px 56px 1fr; padding-top: 15px; }
.floatbar::before { content: ""; }
.fitem { display: flex; flex-direction: column; align-items: center; text-align: center; font-size: 12px; line-height: 17px; color: #444; }
.ficon { height: 36px; display: flex; align-items: center; justify-content: center; margin-bottom: 5px; }
.gen1 span { width: 60px; }
.ppt { width: 23px; height: 23px; border-radius: 4px; background: linear-gradient(135deg, #f87a48, #e5502a); color: #fff; font: 700 15px/23px "Liberation Sans", Arial, sans-serif; text-align: center; }
.fonts { display: flex; flex-direction: column; }
.fontrow { display: flex; align-items: center; height: 29px; }
.sel-box { height: 29px; border: 1px solid #eaeaea; border-radius: 8px; display: flex; align-items: center; justify-content: space-between; padding: 0 6px 0 9px; font-size: 14px; color: #333; }
.family { width: 160px; }
.size { width: 60px; margin-left: 5px; }
.grow { width: 32px; font-size: 18px; color: #444; line-height: 20px; text-align: center; font-family: "Liberation Sans", Arial, sans-serif; }
.grow:first-of-type { margin-left: 3px; }
.grow sup { font-size: 11px; line-height: 0; }
.fmtrow { display: flex; align-items: center; height: 28px; margin-top: 9px; padding-left: 4px; font-family: "Liberation Sans", Arial, sans-serif; }
.fmt { font-size: 18px; color: #333; line-height: 18px; width: 21px; text-align: center; }
.bold { font-style: italic; text-decoration: underline; text-decoration-thickness: 2px; text-underline-offset: 3px; }
.acolor { margin-left: 12px; width: 22px; text-decoration: underline; text-decoration-color: #ccc; text-decoration-thickness: 3px; text-underline-offset: 3px; }
.fmtrow .caret { border-left-width: 3px; border-right-width: 3px; border-top-width: 4px; }
.rowsep { display: block; flex: none; width: 1px; height: 30px; margin-left: 12px; background: #e6e6e6; }
.fsep { display: block; width: 1px; height: 76px; background: #ececec; justify-self: center; }
.pins { display: flex; flex-direction: column; align-items: flex-end; gap: 40px; padding-right: 12px; padding-top: 1px; }
.aibtn { position: absolute; left: 69px; top: 711px; width: 44px; height: 44px; border-radius: 50%; background: #fff; box-shadow: 0 2px 7px rgba(0,0,0,.2); display: flex; align-items: center; justify-content: center; }
.collapse { position: absolute; right: 0; top: 0; width: 30px; height: 63px; background: #f5f5f5; border-left: 1px solid #eee; border-bottom: 1px solid #eee; border-bottom-left-radius: 4px; display: flex; align-items: center; justify-content: center; }
.vscroll { position: absolute; right: 1px; top: 240px; width: 10px; height: 477px; background: #ccc; border-radius: 5px; }
.hscroll { position: absolute; left: 494px; top: 783px; width: 680px; height: 10px; background: #ccc; border-radius: 5px; }

/* Right panel */
.panel { position: relative; flex: 1; background: #f5f5f5; border-left: 1px solid #dcdcdc; display: flex; flex-direction: column; font-size: 14px; color: #444; overflow: hidden; }
.ptabs { height: 51px; flex: none; border-bottom: 1px solid #e2e2e2; display: grid; grid-template-columns: repeat(5, 74px); position: relative; z-index: 1; background: #f5f5f5; }
.ptab { display: flex; align-items: center; justify-content: center; }
.ptab.on { background: #d9efe9; border-bottom: 3px solid #1aa57d; height: 51px; }
.pbody { flex: 1; padding: 0 16px 0 17px; }
.row { display: flex; align-items: center; height: 33px; }
.row.first { margin-top: -27px; }
.row.first .check { margin-top: 6px; }
.row.first .ctl-a { margin-left: 130px; width: 67px; }
.row.first .swatchctl { margin-left: 13px; }
.check { display: block; width: 18px; height: 18px; border: 1px solid #d8d8d8; border-radius: 3px; background: #fff; flex: none; }
.check.on { background: #14ad82; border-color: #14ad82; }
.checkrow { gap: 8px; }
.shadow { margin-top: 14px; }
.custom { margin-top: 9px; }
.checklabel { display: flex; align-items: center; gap: 8px; }
.div { border: 0; height: 1px; background: #e2e2e2; margin: 8px 0 0; }
.d1 { margin-top: 8px; }
.ph { margin: 13px 0 0; font-size: 16px; line-height: 24px; font-weight: 700; color: #111; }
.d2 + .ph, .d3 + .ph { margin-top: 14px; }
.between { justify-content: space-between; }
.r6 { margin-top: 6px; }
.r7 { margin-top: 7px; }
.r9 { margin-top: 9px; }
.ctl { height: 33px; background: #fff; border-radius: 8px; border: 1px solid #f0f0f0; display: flex; align-items: center; justify-content: space-between; padding: 0 9px 0 9px; width: 68px; }
.swatchctl { width: 108px; padding-left: 4px; }
.swatch { display: block; border-radius: 5px; height: 25px; }
.navy { width: 75px; background: #2a5291; }
.mini { width: 35px; margin-left: -5px; }
.gray { background: #d4d4d4; }
.gold { background: #f5c350; }
.pair { display: grid; grid-template-columns: 57px 68px 1fr 68px; align-items: center; height: 33px; }
.pair.wide { grid-template-columns: 77px 68px 1fr 68px; }
.rl { text-align: right; padding-right: 11px; }
.pair.wide .rl { padding-right: 9px; }
.ln { display: block; width: 28px; }
.heavy { height: 3px; background: #333; }
.thin { height: 1px; background: #888; }
.light { background: #aaa; }
.row.r6 { height: 56px; }
.struct { height: 56px; width: 108px; padding-left: 19px; }
.spacing-title { margin-top: 16px; line-height: 20px; }
.spin-row { margin-top: 15px; height: 28px; }
.spin { height: 28px; padding-right: 0; }
.arrows { display: flex; flex-direction: column; gap: 5px; padding-right: 3px; }
.up { display: block; width: 0; height: 0; border-left: 3.500px solid transparent; border-right: 3.500px solid transparent; border-bottom: 4px solid #444; }
.down { display: block; width: 0; height: 0; border-left: 3.500px solid transparent; border-right: 3.500px solid transparent; border-top: 4px solid #444; }
.reset { display: block; margin: 15px 0 0 24px; width: 288px; height: 38px; background: #fff; border: 1px solid #f0f0f0; border-radius: 8px; font: inherit; color: #222; }
.activate { position: absolute; left: 4px; top: 729px; color: #c9c9c9; white-space: nowrap; }
.a1 { font-size: 24px; line-height: 32px; }
.a2 { font-size: 16px; line-height: 24px; margin-top: 2px; }
.pscroll { position: absolute; right: 0; top: 304px; width: 10px; height: 490px; background: #ccc; border-radius: 5px 5px 0 0; }

/* Status bar */
.statusbar { height: 42px; flex: none; background: #f5f5f5; border-top: 1px solid #dcdcdc; border-bottom: 1px solid #333; display: flex; align-items: center; justify-content: space-between; }
.st-left { display: grid; grid-template-columns: 40px 36px 132px 67px 97px; align-items: center; padding-left: 12px; height: 100%; }
.pagesel { height: 30px; border-left: 1px solid #ddd; border-right: 1px solid #ddd; padding: 0 10px 2px 12px; display: flex; align-items: center; justify-content: space-between; font-size: 14px; color: #333; }
.addpage { justify-self: center; }
.pagetab { height: 30px; border-left: 1px solid #ddd; border-right: 1px solid #ddd; color: #1aa57d; font-weight: 700; font-size: 14px; text-align: center; line-height: 26px; position: relative; }
.pagetab::after { content: ""; position: absolute; left: 3px; right: 3px; bottom: 1px; height: 2px; background: #1aa57d; }
.st-right { display: grid; grid-template-columns: 115px 35px 35px 35px 35px 35px 26px 125px 24px 48px 31px 44px 42px; align-items: center; justify-items: center; padding-right: 7px; height: 100%; }
.status { position: relative; justify-self: start; font-size: 14px; line-height: 18px; white-space: nowrap; height: 100%; padding: 8px 0 0 2px; }
.progress { position: absolute; left: 0; bottom: 3px; width: 108px; height: 3px; background: linear-gradient(90deg, #1aa57d 3px, #ddd 3px); border-radius: 2px; }
.slider { position: relative; width: 125px; height: 16px; }
.track { position: absolute; left: 0; right: 0; top: 7px; height: 2px; background: #e6e6e6; }
.fillbar { position: absolute; left: 0; width: 30px; top: 7px; height: 2px; background: #111; }
.knob { position: absolute; left: 25px; top: 0; width: 16px; height: 16px; border-radius: 50%; background: #fff; border: 3px solid #111; }
.zoomval { justify-self: end; font-size: 14px; white-space: nowrap; padding-right: 5px; }
.st-right .caret { justify-self: start; }

/* Annotation over the screenshot */
.callout { position: absolute; left: 0; top: 0; pointer-events: none; }
```
